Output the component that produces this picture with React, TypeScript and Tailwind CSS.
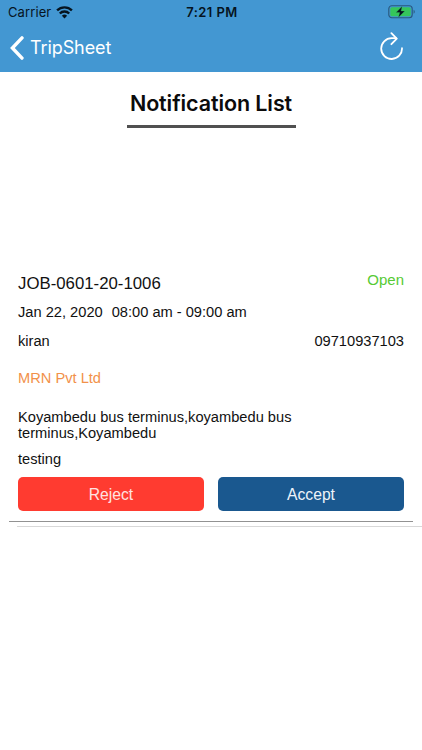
const job = {
  id: 'JOB-0601-20-1006',
  status: 'Open',
  date: 'Jan 22, 2020',
  time: '08:00 am - 09:00 am',
  name: 'kiran',
  phone: '09710937103',
  company: 'MRN Pvt Ltd',
  address: 'Koyambedu bus terminus,koyambedu bus terminus,Koyambedu',
  note: 'testing',
};

const WifiIcon = () => (
  <svg width="17" height="13" viewBox="0 0 17 13" fill="none" stroke="#06141f" strokeWidth="2.4">
    <path d="M1.1 4.4a10.5 10.5 0 0 1 14.8 0" />
    <path d="M3.8 7.5a6.7 6.7 0 0 1 9.4 0" />
    <path d="M8.5 12.4 5.9 9.8a3.7 3.7 0 0 1 5.2 0z" fill="#06141f" stroke="none" />
  </svg>
);

const BatteryIcon = () => (
  <svg width="28" height="14" viewBox="0 0 28 14" fill="none">
    <rect x="0.8" y="0.8" width="23.4" height="12" rx="3" stroke="#28587c" strokeWidth="1.1" />
    <rect x="2.3" y="2.3" width="20.4" height="9" rx="1.6" fill="#35c65b" />
    <path d="M25.6 4.8c1.5.5 1.5 3.5 0 4z" fill="#28587c" />
    <path d="M14.2 1.2 8 7.6h3.7l-1.3 4.9 6.4-6.5h-3.7z" fill="#06141f" stroke="#35c65b" strokeWidth="0.3" />
  </svg>
);

const BackIcon = () => (
  <svg width="14" height="24" viewBox="0 0 14 24" fill="none" stroke="#fff" strokeWidth="3.4" strokeLinecap="round">
    <path d="M12 1.9 2.4 12 12 22.1" />
  </svg>
);

const RefreshIcon = () => (
  <svg width="24" height="28" viewBox="0 0 24 28" fill="none" stroke="#fff" strokeWidth="1.8" strokeLinecap="round" strokeLinejoin="round">
    <path d="M22 16.2A10.4 10.4 0 1 1 11.6 6.2H16" />
    <path d="m11.4 1.2 5.4 5.4-5.4 5.6" />
  </svg>
);

const Header = () => (
  <header className="h-[72px] bg-[#4397d2]">
    <div className="grid h-6 grid-cols-3 items-center pl-2 pr-[6px] text-[#06141f]">
      <div className="flex items-center gap-[5px]">
        <span className="text-[13px] leading-6 tracking-[0.1px]">Carrier</span>
        <WifiIcon />
      </div>
      <span className="text-center text-[13px] font-semibold leading-6 tracking-[0.45px]">7:21 PM</span>
      <div className="flex justify-end">
        <BatteryIcon />
      </div>
    </div>
    <div className="flex h-12 items-center justify-between pl-[10px] pr-[18px] text-white">
      <button className="flex items-center gap-[6px]">
        <BackIcon />
        <span className="text-[18px] leading-6 tracking-[-0.1px]">TripSheet</span>
      </button>
      <button className="mb-[5px]">
        <RefreshIcon />
      </button>
    </div>
  </header>
);

const JobCard = () => (
  <section className="mt-[142px] px-[18px] font-['Liberation_Sans',Arial,sans-serif] text-[14.65px] text-[#111]">
    <div className="flex h-[27px] justify-between">
      <h2 className="pt-[3px] text-[16.8px] leading-[21px]">{job.id}</h2>
      <span className="text-[15px] leading-5 text-[#56ca35]">{job.status}</span>
    </div>
    <div className="flex h-[30px] items-center gap-[9px] pt-[2px]">
      <span>{job.date}</span>
      <span>{job.time}</span>
    </div>
    <div className="flex h-[29px] items-center justify-between">
      <span>{job.name}</span>
      <span>{job.phone}</span>
    </div>
    <p className="mt-3 leading-5 text-[#f2914a]">{job.company}</p>
    <p className="mt-[21px] w-[290px] leading-4">{job.address}</p>
    <p className="mt-[10px] leading-4">{job.note}</p>
    <div className="mt-[10px] grid grid-cols-2 gap-[14px] text-[15.7px] text-white">
      <button className="h-[34px] rounded-[5px] bg-[#ff3b30] pt-px text-[#ffe3e1]">Reject</button>
      <button className="h-[34px] rounded-[5px] bg-[#1a588f] pt-px text-[#edf4fa]">Accept</button>
    </div>
  </section>
);

const App = () => (
  <main className="h-[750px] w-[422px] overflow-hidden bg-white font-['Inter',sans-serif]">
    <Header />
    <div className="mx-auto flex h-[56px] w-[169px] flex-col items-center justify-between border-b-[3px] border-[#505050] pt-[15px]">
      <h1 className="whitespace-nowrap text-[21.5px] font-semibold leading-8 tracking-[-0.1px] text-[#0b0b0b]">Notification List</h1>
    </div>
    <JobCard />
    <div className="ml-[9px] mr-[9px] mt-[10px] border-t border-[#929292]" />
    <div className="ml-[17px] mt-1 border-t border-[#d8d8d8]" />
  </main>
);

export default App;
